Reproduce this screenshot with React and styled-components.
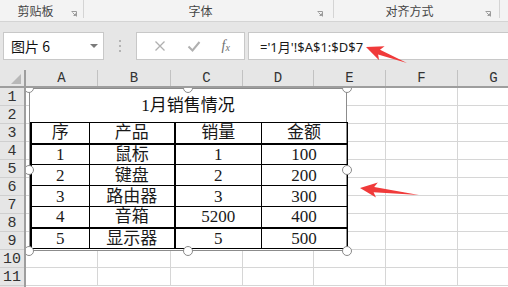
import styled, { createGlobalStyle } from "styled-components";

const GlobalStyle = createGlobalStyle`
  html, body {
    margin: 0;
    padding: 0;
  }
  body {
    width: 508px;
    height: 287px;
    overflow: hidden;
    background: #ffffff;
    font-family: "Noto Sans", "Noto Sans CJK SC", sans-serif;
  }
  * {
    box-sizing: border-box;
  }
`;

const SERIF = `"Liberation Serif", "Times New Roman", "Noto Sans CJK SC", serif`;
const MONO = `"Liberation Mono", "Courier New", monospace`;

const Window = styled.div`
  position: relative;
  width: 508px;
  height: 287px;
  display: flex;
  flex-direction: column;
  overflow: hidden;
`;

const Ribbon = styled.div`
  height: 22px;
  flex-shrink: 0;
  display: flex;
  background: #f3f3f3;
  border-bottom: 1px solid #d4d4d4;
`;

const RibbonGroup = styled.div`
  width: ${(p) => p.$w}px;
  height: 18px;
  display: flex;
  align-items: center;
  padding-right: ${(p) => p.$pr || 6}px;
  border-right: 1px solid #d4d4d4;
  flex-shrink: 0;
`;

const GroupLabel = styled.div`
  flex: 1;
  text-align: center;
  font-family: "Noto Sans CJK SC", sans-serif;
  font-size: 12px;
  line-height: 18px;
  color: #444;
  padding-top: 4px;
`;

const Launcher = styled.svg`
  width: 6px;
  height: 6px;
  margin-top: 10px;
`;

const FormulaBar = styled.div`
  height: 48px;
  flex-shrink: 0;
  display: flex;
  align-items: flex-start;
  padding: 10px 0 0 3px;
  background: #e6e6e6;
`;

const NameBox = styled.div`
  width: 101px;
  height: 28px;
  display: flex;
  align-items: center;
  justify-content: space-between;
  padding: 0 5px 0 7px;
  background: #fff;
  border: 1px solid #c8c8c8;
  font-family: "Noto Sans CJK SC", sans-serif;
  font-size: 14px;
  color: #111;
`;

const Caret = styled.span`
  width: 0;
  height: 0;
  border-left: 4px solid transparent;
  border-right: 4px solid transparent;
  border-top: 4px solid #7a7a7a;
`;

const Dots = styled.div`
  width: 32px;
  height: 28px;
  display: flex;
  flex-direction: column;
  align-items: center;
  justify-content: center;
  gap: 3px;
`;

const Dot = styled.span`
  width: 2px;
  height: 2px;
  background: #b4b4b4;
`;

const FuncBox = styled.div`
  width: 109px;
  height: 28px;
  display: flex;
  align-items: center;
  justify-content: space-around;
  padding: 0 4px 0 6px;
  background: #fff;
  border: 1px solid #c8c8c8;
`;

const FuncIcon = styled.svg`
  width: 14px;
  height: 14px;
`;

const Fx = styled.span`
  font-family: ${SERIF};
  font-style: italic;
  font-size: 14px;
  color: #6e6e6e;
  sub {
    font-size: 10px;
    vertical-align: -1px;
  }
`;

const FormulaInput = styled.div`
  flex: 1;
  height: 28px;
  margin-left: 3px;
  display: flex;
  align-items: center;
  padding-left: 11px;
  background: #fff;
  border: 1px solid #c8c8c8;
  border-right: none;
  font-family: "Noto Sans", "Noto Sans CJK SC", sans-serif;
  font-size: 13px;
  color: #1a1a1a;
`;

const Sheet = styled.div`
  flex: 1;
  display: flex;
  flex-direction: column;
  background: #fff;
`;

const HeaderRow = styled.div`
  height: 18px;
  flex-shrink: 0;
  display: flex;
  background: #e6e6e6;
  border-bottom: 2px solid #9e9e9e;
`;

const Corner = styled.div`
  width: 26px;
  flex-shrink: 0;
  display: flex;
  align-items: flex-end;
  justify-content: flex-end;
  padding: 0 3px 2px 0;
  border-right: 2px solid #9e9e9e;
`;

const ColHead = styled.div`
  width: ${(p) => p.$w}px;
  flex-shrink: 0;
  text-align: center;
  font-family: ${MONO};
  font-size: 14px;
  line-height: 17px;
  color: #333;
  border-right: 1px solid #c2c2c2;
`;

const Body = styled.div`
  flex: 1;
  display: flex;
  overflow: hidden;
`;

const RowHeads = styled.div`
  width: 26px;
  flex-shrink: 0;
  background: #e6e6e6;
  border-right: 2px solid #9e9e9e;
`;

const RowHead = styled.div`
  height: 18px;
  text-align: center;
  font-family: ${MONO};
  font-size: 15px;
  line-height: 19px;
  color: #333;
  border-bottom: 1px solid #cfcfcf;
`;

const CellArea = styled.div`
  position: relative;
  flex: 1;
  overflow: hidden;
`;

const Cells = styled.div`
  display: grid;
  grid-template-columns: 72px 73px 72px 71px 72px 72px 72px;
  grid-auto-rows: 18px;
`;

const Cell = styled.div`
  border-right: 1px solid #d6d6d6;
  border-bottom: 1px solid #d6d6d6;
`;

const Picture = styled.div`
  position: absolute;
  left: 3px;
  top: 0;
  width: 318px;
  height: 163px;
  background: #fff;
  border: 1px solid #8c8c8c;
  display: flex;
  flex-direction: column;
`;

const Title = styled.div`
  height: 33px;
  text-align: center;
  font-family: ${SERIF};
  font-size: 17px;
  line-height: 34px;
  color: #111;
`;

const Table = styled.table`
  width: 316px;
  border-collapse: collapse;
  table-layout: fixed;
`;

const Td = styled.td`
  height: 21px;
  padding: 0;
  text-align: center;
  font-family: ${SERIF};
  font-size: 17px;
  line-height: 19px;
  color: #1a1a1a;
  border: 1px solid #000;
  border-bottom-width: ${(p) => (p.$thickBottom ? 2 : 1)}px;
  border-right-width: ${(p) => (p.$thickRight ? 2 : 1)}px;
  border-left-width: ${(p) => (p.$thickLeft ? 2 : 1)}px;
`;

const Handle = styled.span`
  position: absolute;
  width: 10px;
  height: 10px;
  margin: -5px 0 0 -5px;
  border-radius: 50%;
  background: #fff;
  border: 1.5px solid #8a8a8a;
`;

const Overlay = styled.svg`
  position: absolute;
  left: 0;
  top: 0;
  width: 508px;
  height: 287px;
  pointer-events: none;
`;

const groups = [
  { w: 84, label: "剪贴板", launcher: true, pr: 6 },
  { w: 250, label: "字体", launcher: true, pr: 10 },
  { w: 166, label: "对齐方式", launcher: true, pr: 8 },
  { w: 30, label: "", launcher: false, pr: 0 },
];

const columns = [
  { id: "A", w: 72 },
  { id: "B", w: 73 },
  { id: "C", w: 72 },
  { id: "D", w: 71 },
  { id: "E", w: 72 },
  { id: "F", w: 72 },
  { id: "G", w: 72 },
];

const ROW_COUNT = 11;

const rows = [
  ["序", "产品", "销量", "金额"],
  ["1", "鼠标", "1", "100"],
  ["2", "键盘", "2", "200"],
  ["3", "路由器", "3", "300"],
  ["4", "音箱", "5200", "400"],
  ["5", "显示器", "5", "500"],
];

const handles = [
  [3, 0],
  [162, 0],
  [321, 0],
  [3, 82],
  [321, 82],
  [3, 163],
  [162, 163],
  [321, 163],
];

function LauncherIcon() {
  return (
    <Launcher viewBox="0 0 6 6">
      <path d="M0.5 0.5H5.5V5.5" fill="none" stroke="#9a9a9a" strokeWidth="1" />
      <path d="M1.5 1.5L4.5 4.5M2.5 4.5H4.5V2.5" fill="none" stroke="#9a9a9a" strokeWidth="1" />
    </Launcher>
  );
}

function Arrow({ tip, tail }) {
  const [tx, ty] = tip;
  const dx = tail[0] - tx;
  const dy = tail[1] - ty;
  const len = Math.hypot(dx, dy);
  const ux = dx / len;
  const uy = dy / len;
  const pt = (u, v) =>
    `${(tx + ux * u - uy * v).toFixed(1)},${(ty + uy * u + ux * v).toFixed(1)}`;
  const points = [
    pt(0, 0),
    pt(17, -7.5),
    pt(14, -2.6),
    pt(len, 0),
    pt(14, 2.6),
    pt(17, 7.5),
  ].join(" ");
  return <polygon points={points} fill="#f03a3a" />;
}

export default function App() {
  return (
    <>
      <GlobalStyle />
      <Window>
        <Ribbon>
          {groups.map((g, i) => (
            <RibbonGroup key={i} $w={g.w} $pr={g.pr}>
              <GroupLabel>{g.label}</GroupLabel>
              {g.launcher && <LauncherIcon />}
            </RibbonGroup>
          ))}
        </Ribbon>

        <FormulaBar>
          <NameBox>
            <span>图片 6</span>
            <Caret />
          </NameBox>
          <Dots>
            <Dot />
            <Dot />
            <Dot />
          </Dots>
          <FuncBox>
            <FuncIcon viewBox="0 0 14 14">
              <path d="M2.5 2.5L11.5 11.5M11.5 2.5L2.5 11.5" stroke="#b0b0b0" strokeWidth="1.3" />
            </FuncIcon>
            <FuncIcon viewBox="0 0 14 14">
              <path d="M1.5 7.5L5.5 11.5L12.5 3" fill="none" stroke="#b0b0b0" strokeWidth="2" />
            </FuncIcon>
            <Fx>
              f<sub>x</sub>
            </Fx>
          </FuncBox>
          <FormulaInput>='1月'!$A$1:$D$7</FormulaInput>
        </FormulaBar>

        <Sheet>
          <HeaderRow>
            <Corner>
              <svg width="10" height="10" viewBox="0 0 10 10">
                <polygon points="10,0 10,10 0,10" fill="#b8b8b8" />
              </svg>
            </Corner>
            {columns.map((c) => (
              <ColHead key={c.id} $w={c.w}>
                {c.id}
              </ColHead>
            ))}
          </HeaderRow>

          <Body>
            <RowHeads>
              {Array.from({ length: ROW_COUNT }, (_, i) => (
                <RowHead key={i}>{i + 1}</RowHead>
              ))}
            </RowHeads>
            <CellArea>
              <Cells>
                {Array.from({ length: ROW_COUNT * 7 }, (_, i) => (
                  <Cell key={i} />
                ))}
              </Cells>

              <Picture>
                <Title>1月销售情况</Title>
                <Table>
                  <colgroup>
                    <col style={{ width: 58 }} />
                    <col style={{ width: 86 }} />
                    <col style={{ width: 86 }} />
                    <col style={{ width: 86 }} />
                  </colgroup>
                  <tbody>
                    {rows.map((r, ri) => (
                      <tr key={ri}>
                        {r.map((v, ci) => (
                          <Td
                            key={ci}
                            $thickLeft={ci === 0}
                            $thickRight={ci === 1}
                            $thickBottom={ri === 0 || ri === 4}
                          >
                            {v}
                          </Td>
                        ))}
                      </tr>
                    ))}
                  </tbody>
                </Table>
              </Picture>

              {handles.map(([x, y], i) => (
                <Handle key={i} style={{ left: x, top: y }} />
              ))}
            </CellArea>
          </Body>
        </Sheet>

        <Overlay viewBox="0 0 508 287">
          <Arrow tip={[366, 47]} tail={[407, 63]} />
          <Arrow tip={[360, 188]} tail={[419, 195]} />
        </Overlay>
      </Window>
    </>
  );
}
